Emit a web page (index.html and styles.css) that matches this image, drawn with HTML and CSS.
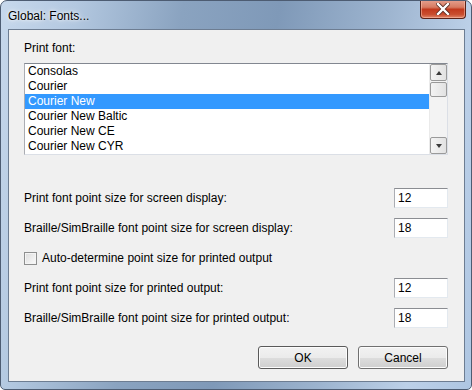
FILE: index.html
```html
<!DOCTYPE html>
<html lang="en">
<head>
    <meta charset="UTF-8">
    <title>Global: Fonts...</title>
    <link rel="stylesheet" href="styles.css">
</head>
<body>
    <div class="window">
        <div class="titlebar">
            <span class="title">Global: Fonts...</span>
            <div class="close">
                <svg width="14" height="12" viewBox="0 0 14 12">
                    <path d="M2 1 L12 11 M12 1 L2 11" stroke="#5a2a20" stroke-width="4" stroke-linecap="square"/>
                    <path d="M2 1 L12 11 M12 1 L2 11" stroke="#ffffff" stroke-width="2.4" stroke-linecap="square"/>
                </svg>
            </div>
        </div>

        <div class="client">
            <div class="label">Print font:</div>

            <div class="listbox">
                <ul class="items">
                    <li>Consolas</li>
                    <li>Courier</li>
                    <li class="selected">Courier New</li>
                    <li>Courier New Baltic</li>
                    <li>Courier New CE</li>
                    <li>Courier New CYR</li>
                </ul>
                <div class="scrollbar">
                    <div class="sb-btn"><span class="arrow up"></span></div>
                    <div class="sb-thumb"></div>
                    <div class="sb-track"></div>
                    <div class="sb-btn"><span class="arrow down"></span></div>
                </div>
            </div>

            <div class="fields">
                <div class="row">
                    <span>Print font point size for screen display:</span>
                    <div class="textbox">12</div>
                </div>
                <div class="row">
                    <span>Braille/SimBraille font point size for screen display:</span>
                    <div class="textbox">18</div>
                </div>
                <div class="row check-row">
                    <span class="checkbox"></span>
                    <span>Auto-determine point size for printed output</span>
                </div>
                <div class="row">
                    <span>Print font point size for printed output:</span>
                    <div class="textbox">12</div>
                </div>
                <div class="row">
                    <span>Braille/SimBraille font point size for printed output:</span>
                    <div class="textbox">18</div>
                </div>
            </div>

            <div class="buttons">
                <button class="btn default">OK</button>
                <button class="btn">Cancel</button>
            </div>
        </div>
    </div>
</body>
</html>
```

FILE: styles.css
```css
body {
    margin: 0;
    background-color: #ffffff;
    font-family: "Liberation Sans", Arial, sans-serif;
    font-size: 12px;
    color: #000;
}

.window {
    width: 472px;
    height: 390px;
    box-sizing: border-box;
    border: 1px solid #4d5c72;
    border-radius: 7px 7px 5px 5px;
    background: linear-gradient(100deg, #c7d8ec 0%, #b3c8e0 14%, #8aa3c0 34%, #7f99b8 52%, #9db4cf 72%, #bcd0e8 88%, #aec6e2 100%);
    display: flex;
    flex-direction: column;
    overflow: hidden;
}

.titlebar {
    height: 28px;
    display: flex;
    justify-content: space-between;
    align-items: flex-start;
    flex-shrink: 0;
}

.title {
    font-size: 12px;
    margin: 8px 0 0 7px;
    text-shadow: 0 0 6px rgba(255, 255, 255, 0.9), 0 0 3px rgba(255, 255, 255, 0.9);
}

.close {
    width: 44px;
    height: 18px;
    margin: -1px 5px 0 0;
    border: 1px solid #5b2218;
    border-top: none;
    border-radius: 0 0 4px 4px;
    background: linear-gradient(#e6a18f 0%, #d77b62 40%, #c2391d 52%, #c94e2f 80%, #e0866a 100%);
    display: flex;
    justify-content: center;
    align-items: center;
    box-shadow: inset 0 0 0 1px rgba(255, 200, 180, 0.5);
}

.client {
    flex: 1;
    margin: 0 6px 7px 7px;
    border: 1px solid #6d7d92;
    background-color: #f0f0f0;
    padding: 11px 16px 0 15px;
    display: flex;
    flex-direction: column;
}

.label {
    line-height: 15px;
}

.listbox {
    margin-top: 7px;
    height: 90px;
    border: 1px solid #abadb3;
    border-top-color: #828790;
    border-right-color: #dbdfe6;
    border-bottom-color: #dbdfe6;
    background-color: #fff;
    display: flex;
}

.items {
    list-style-type: none;
    margin: 0;
    padding: 0;
    flex: 1;
}

.items li {
    height: 15px;
    line-height: 15px;
    padding-left: 3px;
}

.items li.selected {
    background-color: #3399ff;
    color: #fff;
}

.scrollbar {
    width: 17px;
    display: flex;
    flex-direction: column;
    background-color: #f3f3f3;
    border-left: 1px solid #eaeaea;
}

.sb-btn, .sb-thumb {
    height: 15px;
    border: 1px solid #9a9a9a;
    border-radius: 2px;
    background: linear-gradient(to right, #f4f4f4, #e2e2e2);
    display: flex;
    justify-content: center;
    align-items: center;
}

.sb-thumb {
    height: 13px;
    margin-top: 1px;
}

.sb-track {
    flex: 1;
}

.arrow {
    width: 0;
    height: 0;
    border-left: 3px solid transparent;
    border-right: 3px solid transparent;
}

.arrow.up {
    border-bottom: 4px solid #3a3a3a;
}

.arrow.down {
    border-top: 4px solid #3a3a3a;
}

.fields {
    margin-top: 33px;
    display: flex;
    flex-direction: column;
    gap: 10px;
}

.row {
    height: 20px;
    display: flex;
    justify-content: space-between;
    align-items: center;
}

.check-row {
    justify-content: flex-start;
    gap: 5px;
}

.checkbox {
    width: 11px;
    height: 11px;
    border: 1px solid #8e8f8f;
    background: linear-gradient(135deg, #dcdcdc, #fbfbfb);
    box-shadow: inset 0 0 0 1px #f4f4f4;
}

.textbox {
    width: 49px;
    height: 18px;
    line-height: 18px;
    padding-left: 3px;
    border: 1px solid #abadb3;
    border-top-color: #8b8d92;
    border-right-color: #e3e9ef;
    border-bottom-color: #e3e9ef;
    background-color: #fff;
}

.buttons {
    margin-top: 18px;
    display: flex;
    justify-content: flex-end;
    gap: 10px;
}

.btn {
    width: 90px;
    height: 23px;
    font-family: "Liberation Sans", Arial, sans-serif;
    font-size: 12px;
    color: #000;
    border: 1px solid #707070;
    border-radius: 3px;
    background: linear-gradient(#f2f2f2 0%, #ebebeb 50%, #dddddd 51%, #cfcfcf 100%);
    box-shadow: inset 0 0 0 1px #fcfcfc;
    padding: 0;
}

.btn.default {
    border-color: #5a5a5a;
}
```
